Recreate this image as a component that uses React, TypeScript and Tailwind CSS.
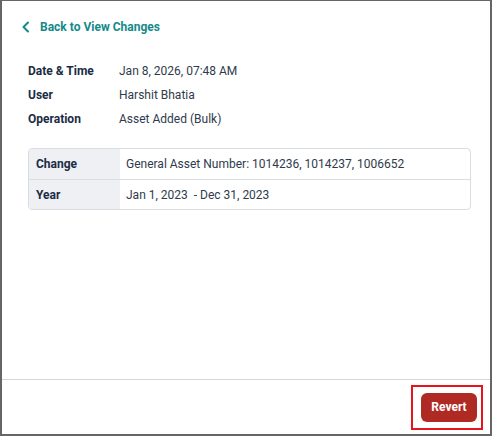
import React from "react";

const details = [
  { label: "Date & Time", value: "Jan 8, 2026, 07:48 AM" },
  { label: "User", value: "Harshit Bhatia" },
  { label: "Operation", value: "Asset Added (Bulk)" },
];

const changes = [
  { label: "Change", value: "General Asset Number: 1014236, 1014237, 1006652" },
  { label: "Year", value: "Jan 1, 2023\u00a0 - Dec 31, 2023" },
];

const ChangeDetail = () => {
  return (
    <div
      className="w-[492px] h-[436px] bg-white flex flex-col border-t border-l-2 border-r-2 border-b-2 border-[#666666]"
      style={{ fontFamily: "Roboto, 'Liberation Sans', sans-serif" }}
    >
      <div className="flex-1 pl-[26px] pr-[19px] pt-[18px]">
        <button className="-ml-[7px] flex items-center gap-[9px] h-4 text-[#138a8a] text-[12px] font-bold">
          <svg width="10" height="12" viewBox="0 0 10 12" fill="none">
            <path d="M7 1.5 2.5 6 7 10.5" stroke="currentColor" strokeWidth="2" strokeLinecap="round" strokeLinejoin="round" />
          </svg>
          Back to View Changes
        </button>

        <div className="mt-[24px]">
          {details.map((d) => (
            <div key={d.label} className="flex h-6 items-center text-[12px]">
              <span className="w-[91px] font-bold text-[#1b2c44]">{d.label}</span>
              <span className="text-[#2f3b4c]">{d.value}</span>
            </div>
          ))}
        </div>

        <div className="mt-[17px] border border-[#d9dce1] rounded-[4px] overflow-hidden">
          {changes.map((c, i) => (
            <div
              key={c.label}
              className={`flex h-[30px] text-[12px] ${i > 0 ? "border-t border-[#d9dce1]" : ""}`}
            >
              <div className="w-[91px] bg-[#eef0f4] flex items-center pl-[7px] font-bold text-[#1b2c44]">
                {c.label}
              </div>
              <div className="flex-1 flex items-center pl-[6px] text-[#2f3b4c]">{c.value}</div>
            </div>
          ))}
        </div>
      </div>

      <div className="h-[55px] border-t border-[#d6d6d6] flex items-center justify-end pr-[7px]">
        <div className="border-2 border-[#e8141c] pl-[8px] pr-[4px] py-[6px]">
          <button className="w-[56px] h-[29px] rounded-[6px] bg-[#b02a24] text-white text-[12px] font-bold">
            Revert
          </button>
        </div>
      </div>
    </div>
  );
};

export default function App() {
  return <ChangeDetail />;
}
